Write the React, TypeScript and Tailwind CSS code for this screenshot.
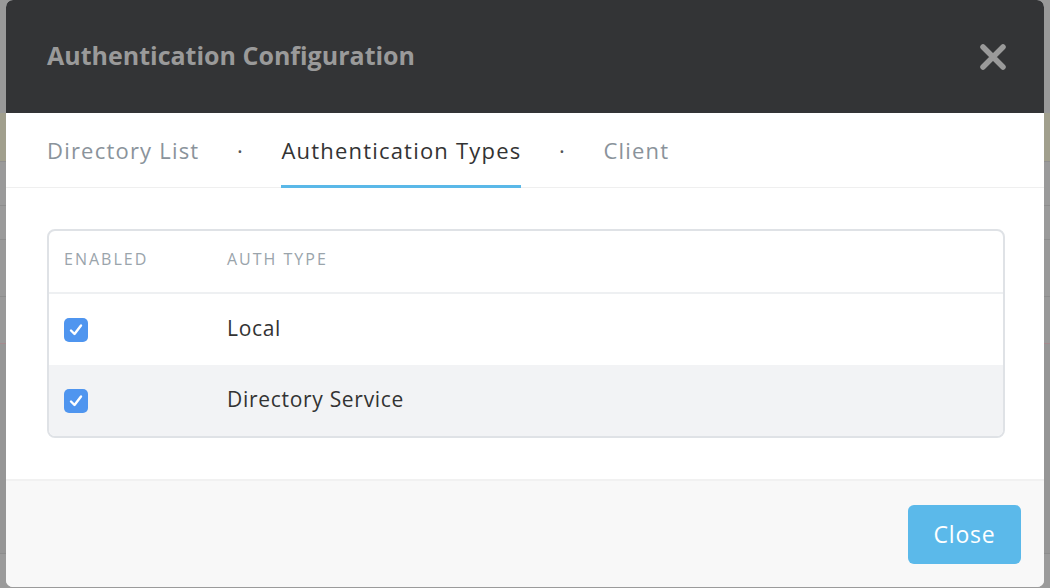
import React from "react";

function Check() {
  return (
    <div className="flex h-[24px] w-[24px] items-center justify-center rounded-[5px] bg-[#4f95ef]">
      <svg width="18" height="18" viewBox="0 0 18 18" fill="none">
        <path d="M4 9.5 L7.5 13 L14 4.5" stroke="white" strokeWidth="2.4" strokeLinecap="round" strokeLinejoin="round" />
      </svg>
    </div>
  );
}

export default function App() {
  const font = { fontFamily: "'Open Sans', Lato, sans-serif" };
  return (
    <div className="relative h-[588px] w-[1050px] overflow-hidden bg-[#9b9b9b]" style={font}>
      {/* background page (dimmed) */}
      <div className="flex flex-col">
        <div className="h-[113px] bg-[#999999]" />
        <div className="h-[49px] bg-[#a19f8d] border-b border-[#8f8f8f]" />
        <div className="h-[44px] bg-[#9a9a9a] border-b border-[#8d8d8d]" />
        <div className="h-[34px] bg-[#9a9a9a] border-b border-[#8d8d8d]" />
        <div className="h-[57px] bg-[#999999] border-b border-[#8d8d8d]" />
        <div className="h-[47px] bg-[#999999] border-b border-[#a58a8e]" />
        <div className="h-[210px] bg-[#969696] border-b border-[#8d8d8d]" />
      </div>

      {/* modal */}
      <div className="absolute left-[6px] top-0 flex h-[587px] w-[1038px] flex-col overflow-hidden rounded-[7px] bg-white">
        <div className="flex h-[113px] items-center justify-between bg-[#333436] pl-[41px] pr-[37px]">
          <div className="pb-[1px] text-[25px] font-bold tracking-[0px] text-[#9a9a9a]">Authentication Configuration</div>
          <svg width="28" height="28" viewBox="0 0 28 28">
            <path d="M4 4 L24 24 M24 4 L4 24" stroke="#9a9a9a" strokeWidth="5.5" strokeLinecap="round" />
          </svg>
        </div>

        <div className="flex h-[75px] items-stretch border-b border-[#efefef] pl-[41px] text-[22px] tracking-[1.2px]">
          <div className="flex items-center text-[#8a939b]">Directory List</div>
          <div className="flex w-[82px] items-center justify-center text-[#555]">·</div>
          <div className="relative flex items-center text-[#333]">
            Authentication Types
            <div className="absolute bottom-[-1px] left-0 right-0 h-[3px] bg-[#5ab8e8]" />
          </div>
          <div className="flex w-[82px] items-center justify-center text-[#555]">·</div>
          <div className="flex items-center text-[#8a939b]">Client</div>
        </div>

        <div className="flex-none pl-[41px] pr-[39px] py-[41px]">
          <div className="overflow-hidden rounded-[8px] border-2 border-[#dfe2e6]">
            <div className="flex h-[63px] items-center border-b-2 border-[#eef0f2] pb-[5px] text-[16px] tracking-[2px] text-[#9aa4ab]">
              <div className="w-[178px] pl-[15px]">ENABLED</div>
              <div>AUTH TYPE</div>
            </div>
            <div className="flex h-[71px] items-center bg-white text-[21px] tracking-[0.7px] text-[#333]">
              <div className="w-[178px] pl-[15px]"><Check /></div>
              <div className="pb-[1px]">Local</div>
            </div>
            <div className="flex h-[71px] items-center bg-[#f2f3f5] text-[21px] tracking-[0.7px] text-[#333]">
              <div className="w-[178px] pl-[15px]"><Check /></div>
              <div className="pb-[1px]">Directory Service</div>
            </div>
          </div>
        </div>

        <div className="flex flex-1 items-start justify-end border-t-2 border-[#f1f1f1] bg-[#f8f8f8] pr-[23px] pt-[24px]">
          <button className="h-[59px] w-[113px] rounded-[6px] bg-[#5bb9ea] text-[23px] tracking-[0.8px] text-white">Close</button>
        </div>
      </div>
    </div>
  );
}
